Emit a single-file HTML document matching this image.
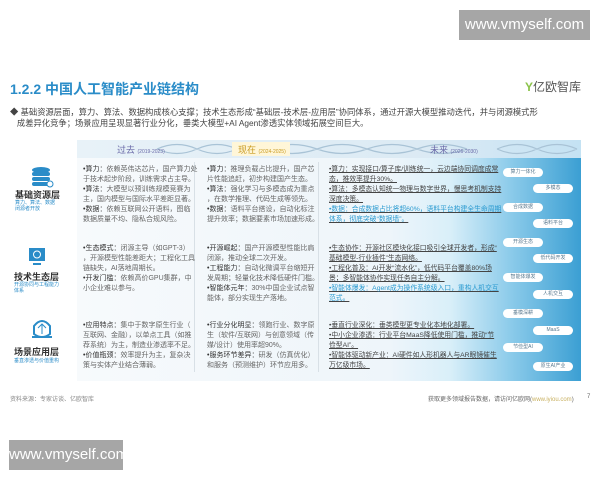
<!DOCTYPE html>
<html><head><meta charset="utf-8"><style>
*{margin:0;padding:0;box-sizing:border-box}
body{width:600px;height:480px;background:#fff;position:relative;overflow:hidden;font-family:"Liberation Sans","Noto Sans CJK SC",sans-serif;color:#555}
.a{position:absolute;white-space:nowrap}
.wm{position:absolute;background:#a6a6a6;color:#fff;font-size:15px;line-height:30px;text-align:center}
.t{font-size:7px;line-height:10px;color:#666}
.f{font-size:6.8px;line-height:10px;color:#444;text-decoration:underline}
.fb{color:#2a9ad0}
.pill{position:absolute;width:40px;height:9px;border-radius:5px;background:#fff;font-size:5px;line-height:9px;text-align:center;color:#5a7a90}
.b{color:#333}
</style></head><body>
<div class="wm" style="left:459px;top:10px;width:131px;height:30px">www.vmyself.com</div>
<div class="wm" style="left:9px;top:440px;width:114px;height:30px">www.vmyself.com</div>

<div class="a" style="left:10px;top:79px;font-size:14px;font-weight:bold;color:#2a8cc8">1.2.2 中国人工智能产业链结构</div>
<div class="a" style="left:525px;top:78px;font-size:12px;color:#555"><span style="color:#8bc34a;font-weight:bold">Y</span>亿欧智库</div>
<div class="a" style="left:10px;top:107px;font-size:8.3px;line-height:10.5px;color:#444">◆ 基础资源层面，算力、算法、数据构成核心支撑；技术生态形成“基础层-技术层-应用层”协同体系，通过开源大模型推动迭代，并与闭源模式形<br>&nbsp;&nbsp;&nbsp;成差异化竞争；场景应用呈现显著行业分化，垂类大模型+AI Agent渗透实体领域拓展空间巨大。</div>

<div class="a" style="left:77px;top:140px;width:504px;height:241px;background:linear-gradient(90deg,#f7fafc 0%,#eef5fa 62%,#d9eff9 74%,#8ccbea 86%,#3b9fd3 100%)"></div>
<div class="a" style="left:77px;top:140px;width:504px;height:18px;background:linear-gradient(90deg,#e8f2f8,#dbeaf4 70%,#c4e2f3)"></div>
<svg class="a" style="left:77px;top:140px" width="504" height="18"><path d="M80 9 Q100 0 120 9 T160 9 M80 9 Q100 18 120 9 T160 9 M190 9 Q215 0 240 9 T290 9 T340 9 T390 9 M190 9 Q215 18 240 9 T290 9 T340 9 T390 9 M420 9 Q440 0 460 9 T500 9 M420 9 Q440 18 460 9 T500 9" stroke="#a9c3d6" fill="none" stroke-width="1.2"/></svg>
<div class="a" style="left:117px;top:143px;font-size:9px;color:#6a6aa8">过去 <span style="font-size:5px">(2019-2023)</span></div>
<div class="a" style="left:232px;top:142px;width:58px;height:14px;background:#fff6d8"></div>
<div class="a" style="left:238px;top:143px;font-size:9px;color:#c89a20">现在 <span style="font-size:5px">(2024-2025)</span></div>
<div class="a" style="left:430px;top:143px;font-size:9px;color:#6a6aa8">未来 <span style="font-size:5px">(2026-2030)</span></div>
<div class="a" style="left:194px;top:162px;width:1px;height:210px;background:#d8e0e6"></div>
<div class="a" style="left:318px;top:162px;width:1px;height:210px;background:#d8e0e6"></div>

<svg class="a" style="left:30px;top:166px" width="24" height="22"><ellipse cx="11" cy="4" rx="9" ry="3" fill="#2a8cc8"/><rect x="2" y="6" width="18" height="4" rx="2" fill="#2a8cc8"/><rect x="2" y="11" width="18" height="4" rx="2" fill="#2a8cc8"/><rect x="2" y="16" width="18" height="4" rx="2" fill="#2a8cc8"/><circle cx="20" cy="18" r="3" fill="#fff" stroke="#2a8cc8"/></svg>
<div class="a" style="left:15px;top:188px;font-size:9px;font-weight:bold;color:#333">基础资源层</div>
<div class="a" style="left:15px;top:200px;font-size:5px;line-height:6px;color:#2a8cc8">算力、算法、数据<br>闭源者开放</div>
<svg class="a" style="left:28px;top:247px" width="18" height="20"><rect x="1" y="1" width="16" height="13" fill="#2a8cc8"/><circle cx="9" cy="7.5" r="3.5" fill="none" stroke="#fff"/><rect x="5" y="16" width="8" height="2" fill="#2a8cc8"/></svg>
<div class="a" style="left:14px;top:270px;font-size:9px;font-weight:bold;color:#333">技术生态层</div>
<div class="a" style="left:14px;top:282px;font-size:5px;line-height:6px;color:#2a8cc8">开源协同与工程能力<br>体系</div>
<svg class="a" style="left:30px;top:318px" width="24" height="24"><path d="M4 8 Q12 -2 20 8 L20 16 Q12 22 4 16Z" fill="none" stroke="#2a8cc8" stroke-width="2"/><rect x="2" y="18" width="20" height="2" fill="#2a8cc8"/><path d="M12 6v10M8 10l4-4 4 4" stroke="#2a8cc8" fill="none"/></svg>
<div class="a" style="left:14px;top:345px;font-size:9px;font-weight:bold;color:#333">场景应用层</div>
<div class="a" style="left:14px;top:357px;font-size:5px;color:#2a8cc8">垂直渗透与价值重构</div>

<div class="a t" style="left:83px;top:165px"><span class="b">•算力：</span>依赖英伟达芯片，国产算力处<br>于技术起步阶段，训练需求占主导。<br><span class="b">•算法：</span>大模型以预训练规模竞赛为<br>主，国内模型与国际水平差距显著。<br><span class="b">•数据：</span>依赖互联网公开语料，图临<br>数据质量不均、隐私合规风险。</div>
<div class="a t" style="left:83px;top:244px"><span class="b">•生态模式：</span>闭源主导（如GPT-3）<br>，开源模型性能差距大；工程化工具<br>链缺失，AI落地周期长。<br><span class="b">•开发门槛：</span>依赖高价GPU集群，中<br>小企业难以参与。</div>
<div class="a t" style="left:83px;top:321px"><span class="b">•应用特点：</span>集中于数字原生行业（<br>互联网、金融），以单点工具（如推<br>荐系统）为主，制造业渗透率不足。<br><span class="b">•价值瓶颈：</span>效率提升为主，复杂决<br>策与实体产业结合薄弱。</div>
<div class="a t" style="left:207px;top:165px"><span class="b">•算力：</span>推理负载占比提升，国产芯<br>片性能追赶，初步构建国产生态。<br><span class="b">•算法：</span>强化学习与多模态成为重点<br>，在数学推理、代码生成等领先。<br><span class="b">•数据：</span>语料平台搭设，自动化标注<br>提升效率；数据要素市场加速形成。</div>
<div class="a t" style="left:207px;top:244px"><span class="b">•开源崛起：</span>国产开源模型性能比肩<br>闭源，推动全球二次开发。<br><span class="b">•工程能力：</span>自动化微调平台缩短开<br>发周期；轻量化技术降低硬件门槛。<br><span class="b">•智能体元年：</span>30%中国企业试点智<br>能体，部分实现生产落地。</div>
<div class="a t" style="left:207px;top:321px"><span class="b">•行业分化明显：</span>领跑行业、数字原<br>生（软件/互联网）与创意领域（传<br>媒/设计）使用率超90%。<br><span class="b">•服务环节差异：</span>研发（仿真优化）<br>和服务（预测维护）环节应用多。</div>
<div class="a f" style="left:329px;top:165px">•算力：实现接口/算子库/训练统一，云边端协同调度成常<br>态，推效率提升30%。<br>•算法：多模态认知统一物理与数字世界，慢思考机制支持<br>深度决策。<br><span class="fb">•数据：合成数据占比将超60%，语料平台构建全生命周期<br>体系，彻底突破“数据墙”。</span></div>
<div class="a f" style="left:329px;top:244px">•生态协作：开源社区模块化接口吸引全球开发者，形成“<br>基础模型-行业插件”生态网络。<br>•工程化普及：AI开发“流水化”，低代码平台覆盖80%场<br>景；多智能体协作实现任务自主分解。<br><span class="fb">•智能体爆发：Agent成为操作系统级入口，重构人机交互<br>范式。</span></div>
<div class="a f" style="left:329px;top:321px">•垂直行业深化：垂类模型更专业化本地化部署。<br>•中小企业渗透：行业平台MaaS降低使用门槛，推动“节<br>俭型AI”。<br>•智能体驱动新产业：AI硬件如人形机器人与AR眼镜催生<br>万亿级市场。</div>

<div class="pill" style="left:503px;top:168px">算力一体化</div>
<div class="pill" style="left:533px;top:184px">多模态</div>
<div class="pill" style="left:503px;top:203px">合成数据</div>
<div class="pill" style="left:533px;top:219px">语料平台</div>
<div class="pill" style="left:503px;top:238px">开源生态</div>
<div class="pill" style="left:533px;top:254px">低代码开发</div>
<div class="pill" style="left:503px;top:273px">智能体爆发</div>
<div class="pill" style="left:533px;top:290px">人机交互</div>
<div class="pill" style="left:503px;top:309px">垂模深耕</div>
<div class="pill" style="left:533px;top:326px">MaaS</div>
<div class="pill" style="left:503px;top:343px">节俭型AI</div>
<div class="pill" style="left:533px;top:362px">原生AI产业</div>

<div class="a" style="left:10px;top:394px;font-size:6px;color:#888">资料来源：专家访谈、亿欧智库</div>
<div class="a" style="left:428px;top:394px;font-size:6px;color:#666">获取更多领域报告数据，请访问亿欧网(<span style="color:#c8b060">www.iyiou.com</span>)</div>
<div class="a" style="left:587px;top:394px;font-size:6px;color:#666">7</div>
</body></html>
